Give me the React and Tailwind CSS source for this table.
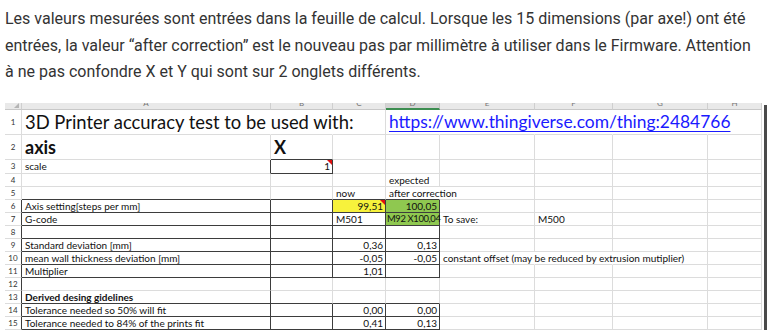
import React from "react";

const cells = {
  1: {
    1: { t: "3D Printer accuracy test to be used with:", big: true },
    4: { t: "https://www.thingiverse.com/thing:2484766 ", link: true },
  },
  2: { 1: { t: "axis", big2: true }, 2: { t: "X", big2: true } },
  3: { 1: { t: "scale" }, 2: { t: "1", right: true, tri: true } },
  4: { 4: { t: "expected" } },
  5: { 3: { t: "now" }, 4: { t: "after correction" } },
  6: {
    1: { t: "Axis setting[steps per mm]" },
    3: { t: "99,51", right: true, bg: "yellow", tri: true },
    4: { t: "100,05", right: true, bg: "green" },
  },
  7: {
    1: { t: "G-code" },
    3: { t: "M501" },
    4: { t: "M92 X100,04", bg: "green", tight: true },
    5: { t: "To save:" },
    6: { t: "M500" },
  },
  9: {
    1: { t: "Standard deviation [mm]" },
    3: { t: "0,36", right: true },
    4: { t: "0,13", right: true },
  },
  10: {
    1: { t: "mean wall thickness deviation [mm]" },
    3: { t: "-0,05", right: true },
    4: { t: "-0,05", right: true },
    5: { t: "constant offset (may be reduced by extrusion mutiplier)" },
  },
  11: { 1: { t: "Multiplier" }, 3: { t: "1,01", right: true } },
  13: { 1: { t: "Derived desing gidelines", bold: true } },
  14: {
    1: { t: "Tolerance needed so 50% will fit" },
    3: { t: "0,00", right: true },
    4: { t: "0,00", right: true },
  },
  15: {
    1: { t: "Tolerance needed to 84% of the prints fit" },
    3: { t: "0,41", right: true },
    4: { t: "0,13", right: true },
  },
};

const hiddenRight = {
  1: [1, 2, 4, 5, 6, 7],
  5: [4],
  10: [5, 6],
};

function rightDark(r, c) {
  const a = [6, 7, 8, 9, 10, 11, 12, 13, 14, 15];
  const b = [6, 7, 8, 9, 10, 11, 14, 15];
  if (c === 0) return a.includes(r);
  if (c === 1) return r === 3 || a.includes(r);
  if (c === 2) return r === 3 || b.includes(r);
  if (c === 3 || c === 4) return b.includes(r);
  return false;
}

function bottomDark(r, c) {
  if (c === 2 && (r === 2 || r === 3)) return true;
  if (c >= 1 && c <= 4 && [5, 6, 7, 8, 9, 10, 11, 13, 14, 15].includes(r)) return true;
  return false;
}

const letters = ["", "A", "B", "C", "D", "E", "F", "G", "H"];

function HeaderCell({ c }) {
  if (c === 0) {
    return (
      <div className="relative bg-[#e9e9e9] border-r border-r-[#cfcfcf] border-b border-b-[#c8c8c8] overflow-hidden">
        <div className="absolute right-[2px] bottom-[1px] w-0 h-0 border-l-[5px] border-l-transparent border-b-[5px] border-b-[#b5b5b5]" />
      </div>
    );
  }
  const sel = c === 4;
  return (
    <div
      className={
        sel
          ? "bg-[#d4d4d4] border-r border-r-[#c4c4c4] border-b-2 border-b-[#3c8d50] overflow-hidden flex justify-center"
          : "bg-[#e9e9e9] border-r border-r-[#cfcfcf] border-b border-b-[#c8c8c8] overflow-hidden flex justify-center"
      }
    >
      <span className="text-[8px] leading-none text-[#777] mt-[-4px]">{letters[c]}</span>
    </div>
  );
}

function Cell({ r, c }) {
  const d = (cells[r] && cells[r][c]) || null;
  const hidden = hiddenRight[r] && hiddenRight[r].includes(c);
  const rd = rightDark(r, c);
  const bd = bottomDark(r, c);
  let cls = "relative flex items-center whitespace-nowrap border-r border-b ";
  cls += hidden ? "border-r-transparent " : rd ? "border-r-[#3d3d3d] " : "border-r-[#dcdcdc] ";
  cls += bd ? "border-b-[#3d3d3d] " : "border-b-[#dcdcdc] ";
  if (c === 0) {
    return <div className={cls + "justify-center text-[8px] text-[#333]"}>{r}</div>;
  }
  if (d && d.bg === "yellow") cls += "bg-[#f7f23c] ";
  else if (d && d.bg === "green") cls += "bg-[#8fc850] ";
  if (d && d.right) cls += "justify-end pr-[2px] ";
  else if (d && d.tight) cls += "pl-[1px] ";
  else cls += "pl-[3px] ";
  let tcls = "text-[10px] leading-none text-[#111] relative z-10 ";
  if (d && d.big) tcls = "text-[18.4px] leading-none text-[#111] relative z-10 mt-[1px] ";
  if (d && d.big2) tcls = "text-[18px] leading-none font-bold text-[#111] relative z-10 ";
  if (d && d.link)
    tcls =
      "text-[17.4px] leading-none text-[#1a1aff] underline underline-offset-[3px] decoration-1 relative z-10 mt-[1px] ";
  if (d && d.bold) tcls += "font-bold ";
  if (d && d.tight) tcls = "text-[9.4px] leading-none text-[#111] relative z-10 tracking-[-0.35px] ";
  return (
    <div className={cls}>
      {d && <span className={tcls}>{d.t}</span>}
      {d && d.tri && (
        <div className="absolute top-0 right-0 w-0 h-0 border-l-[5px] border-l-transparent border-t-[5px] border-t-[#e01010] z-20" />
      )}
    </div>
  );
}

export default function App() {
  const all = [];
  for (let r = 0; r <= 15; r++) {
    for (let c = 0; c <= 8; c++) {
      all.push(r === 0 ? <HeaderCell key={r + "-" + c} c={c} /> : <Cell key={r + "-" + c} r={r} c={c} />);
    }
  }
  return (
    <div className="w-[779px] h-[331px] overflow-hidden bg-white">
      <p
        className="pl-[5px] pt-[6px] text-[16px] leading-[26.5px] text-[#333] whitespace-nowrap"
        style={{ fontFamily: "Roboto, 'Noto Sans', sans-serif" }}
      >
        Les valeurs mesurées sont entrées dans la feuille de calcul. Lorsque les 15 dimensions (par axe!) ont été
        <br />
        entrées, la valeur “after correction” est le nouveau pas par millimètre à utiliser dans le Firmware. Attention
        <br />
        à ne pas confondre X et Y qui sont sur 2 onglets différents.
      </p>
      <div className="mt-[17px] ml-[5px] flex" style={{ fontFamily: "Lato, 'Open Sans', sans-serif" }}>
        <div className="grid grid-cols-[17px_249px_62px_53px_54px_95px_78px_95px_54px] grid-rows-[7px_25px_25px_14px_repeat(12,13px)]">
          {all}
        </div>
        <div className="ml-[2px] w-[3px] bg-[#4a4a4a] mt-[2px]" />
      </div>
    </div>
  );
}
